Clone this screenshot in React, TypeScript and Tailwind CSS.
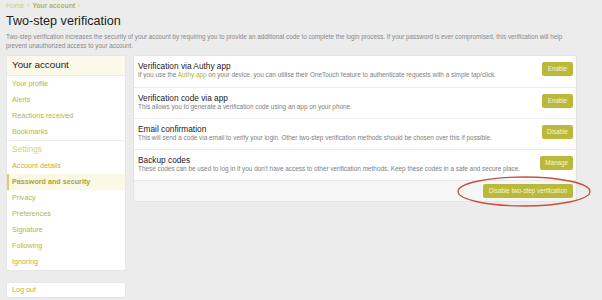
import React from 'react';

const accountLinks = ['Your profile', 'Alerts', 'Reactions received', 'Bookmarks'];
const settingsLinks = ['Account details', 'Password and security', 'Privacy', 'Preferences', 'Signature', 'Following', 'Ignoring'];

const methods = [
    {
        title: 'Verification via Authy app',
        desc: (
            <>
                If you use the <span className="text-[#b3b02e]">Authy app</span> on your device, you can utilise their OneTouch feature to authenticate requests with a simple tap/click.
            </>
        ),
        action: 'Enable',
    },
    {
        title: 'Verification code via app',
        desc: 'This allows you to generate a verification code using an app on your phone.',
        action: 'Enable',
    },
    {
        title: 'Email confirmation',
        desc: 'This will send a code via email to verify your login. Other two-step verification methods should be chosen over this if possible.',
        action: 'Disable',
    },
    {
        title: 'Backup codes',
        desc: "These codes can be used to log in if you don't have access to other verification methods. Keep these codes in a safe and secure place.",
        action: 'Manage',
    },
];

export default function App() {
    return (
        <div className="relative w-[602px] h-[300px] overflow-hidden bg-[#ececec] px-[6px] font-['Liberation_Sans',Arial,sans-serif] text-[#333]">
            {/* Breadcrumb */}
            <div className="pt-[2px] h-[10px] flex items-center gap-[3px] text-[6.8px] leading-[8px]">
                <span className="text-[#cfcd7c]">Home</span>
                <span className="text-[#cfcd7c]">›</span>
                <span className="font-bold text-[#b9b63a]">Your account</span>
                <span className="text-[#cfcd7c]">›</span>
            </div>

            <h1 className="mt-[3px] text-[12.6px] leading-[16px] text-[#222]">Two-step verification</h1>
            <p className="mt-[2.5px] w-[572px] text-[6.3px] leading-[9px] text-[#8a8a8a]">
                Two-step verification increases the security of your account by requiring you to provide an additional code to complete the login process. If your password is ever compromised, this verification will help prevent unauthorized access to your account.
            </p>

            <div className="mt-[5.5px] flex gap-[7px] items-start">
                {/* Sidebar */}
                <div className="w-[120px] flex flex-col gap-[11px]">
                    <div className="bg-white rounded-[2px] border border-[#e6e6e6] overflow-hidden">
                        <div className="h-[20px] flex items-center px-[5px] bg-[#fbf9ea] border-b border-[#eeeedd] text-[9.8px] text-[#222]">Your account</div>
                        {accountLinks.map(l => (
                            <div key={l} className="h-[16px] flex items-center px-[5px] text-[7.2px] text-[#b8b43c]">{l}</div>
                        ))}
                        <div className="border-t border-[#eeeeee] h-[18px] flex items-center px-[5px] text-[8.3px] text-[#d3d07e]">Settings</div>
                        {settingsLinks.map(l => (
                            l === 'Password and security' ? (
                                <div key={l} className="h-[16px] flex items-center pl-[3px] pr-[5px] bg-[#fbf9e6] border-l-2 border-[#d8cf68] text-[7.2px] font-bold text-[#aaa633]">{l}</div>
                            ) : (
                                <div key={l} className="h-[16px] flex items-center px-[5px] text-[7.2px] text-[#b8b43c]">{l}</div>
                            )
                        ))}
                    </div>
                    <div className="h-[16px] bg-white rounded-[2px] border border-[#e6e6e6] flex items-center px-[5px] text-[7.2px] text-[#b8b43c]">Log out</div>
                </div>

                {/* Main panel */}
                <div className="w-[444px] bg-white rounded-[2px] border border-[#e4e4e4] overflow-hidden">
                    {methods.map((m, i) => (
                        <div key={m.title} className={`h-[31px] flex items-start justify-between pl-[4px] pr-[3px] pt-[5px] ${i > 0 ? 'border-t border-[#ececec]' : ''}`}>
                            <div>
                                <div className="text-[8.3px] leading-[10px] text-[#222]">{m.title}</div>
                                <div className="text-[6.4px] leading-[8px] text-[#7e7e7e]">{m.desc}</div>
                            </div>
                            <button className="mt-[1px] h-[14px] px-[5px] min-w-[31px] rounded-[2px] bg-[#bbb93b] text-[6.3px] text-[#f6f5d6]">{m.action}</button>
                        </div>
                    ))}
                    <div className="h-[21px] border-t border-[#e8e8e8] bg-[#f6f6f6] flex items-center justify-end pr-[3px]">
                        <button className="h-[14px] w-[90px] rounded-[2px] bg-[#bbb93b] text-[6.3px] text-[#f6f5d6]">Disable two-step verification</button>
                    </div>
                </div>
            </div>

            {/* Hand-drawn annotation */}
            <svg className="absolute left-[456px] top-[175px]" width="136" height="33" viewBox="0 0 136 33">
                <ellipse cx="68" cy="16.5" rx="66" ry="14.5" fill="none" stroke="#c9503d" strokeWidth="1.3" />
            </svg>
        </div>
    );
}
